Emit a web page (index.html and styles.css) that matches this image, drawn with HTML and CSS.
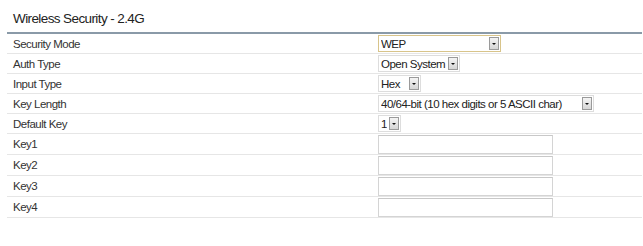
FILE: index.html
```html
<!DOCTYPE html>
<html lang="en">
<head>
  <meta charset="UTF-8">
  <title>Wireless Security - 2.4G</title>
  <link rel="stylesheet" href="styles.css">
</head>
<body>
  <div class="panel">
    <h2 class="panel-title">Wireless Security - 2.4G</h2>
    <div class="rows">
      <div class="row">
        <span class="label">Security Mode</span>
        <div class="sel sel-mode focus"><span class="val">WEP</span><span class="arrow"></span></div>
      </div>
      <div class="row">
        <span class="label">Auth Type</span>
        <div class="sel sel-auth"><span class="val">Open System</span><span class="arrow"></span></div>
      </div>
      <div class="row">
        <span class="label">Input Type</span>
        <div class="sel sel-input"><span class="val">Hex</span><span class="arrow"></span></div>
      </div>
      <div class="row">
        <span class="label">Key Length</span>
        <div class="sel sel-len"><span class="val">40/64-bit (10 hex digits or 5 ASCII char)</span><span class="arrow"></span></div>
      </div>
      <div class="row">
        <span class="label">Default Key</span>
        <div class="sel sel-key"><span class="val">1</span><span class="arrow"></span></div>
      </div>
      <div class="row key-row">
        <span class="label">Key1</span>
        <input type="text" class="key-input">
      </div>
      <div class="row key-row">
        <span class="label">Key2</span>
        <input type="text" class="key-input">
      </div>
      <div class="row key-row">
        <span class="label">Key3</span>
        <input type="text" class="key-input">
      </div>
      <div class="row key-row">
        <span class="label">Key4</span>
        <input type="text" class="key-input">
      </div>
    </div>
  </div>
</body>
</html>
```

FILE: styles.css
```css
* {
  margin: 0;
  padding: 0;
  box-sizing: border-box;
}

body {
  background: #fff;
  font-family: 'Liberation Sans', Arial, sans-serif;
  color: #333;
}

.panel {
  padding: 10px 1px 0 7px;
}

.panel-title {
  font-size: 13.5px;
  font-weight: normal;
  letter-spacing: -0.6px;
  color: #222;
  height: 24px;
  line-height: 18px;
  padding-left: 6px;
  border-bottom: 2px solid #8a9aa8;
}

.row {
  display: flex;
  align-items: center;
  height: 20px;
  border-bottom: 1px solid #e6e6e6;
}

.key-row {
  height: 21px;
}

.label {
  width: 371px;
  flex-shrink: 0;
  padding-left: 6px;
  font-size: 11.5px;
  letter-spacing: -0.5px;
  color: #333;
}

/* old style select boxes */
.sel {
  display: flex;
  align-items: center;
  flex-shrink: 0;
  height: 17px;
  border: 1px solid #ddd;
  background: #fff;
  font-size: 11.5px;
  letter-spacing: -0.5px;
  color: #222;
  padding-left: 2px;
}

.sel .val {
  flex: 1;
  white-space: nowrap;
  overflow: hidden;
}

.sel.focus {
  border-color: #d8c48a;
}

.sel .arrow {
  position: relative;
  flex-shrink: 0;
  width: 10px;
  height: 13px;
  margin: 0 1px 0 2px;
  border: 1px solid #9a9a9a;
  background: linear-gradient(#f4f4f4, #d6d6d6);
}

.sel .arrow::after {
  content: "";
  position: absolute;
  left: 2px;
  top: 5px;
  border-left: 2px solid transparent;
  border-right: 2px solid transparent;
  border-top: 2px solid #111;
}

.sel-mode { width: 123px; }
.sel-auth { width: 82px; }
.sel-input { width: 43px; }
.sel-len { width: 216px; }
.sel-key { width: 23px; }

.key-input {
  flex-shrink: 0;
  width: 175px;
  height: 19px;
  border: 1px solid #d4d4d4;
  border-top-color: #c8c8c8;
  background: #fff;
}
```
